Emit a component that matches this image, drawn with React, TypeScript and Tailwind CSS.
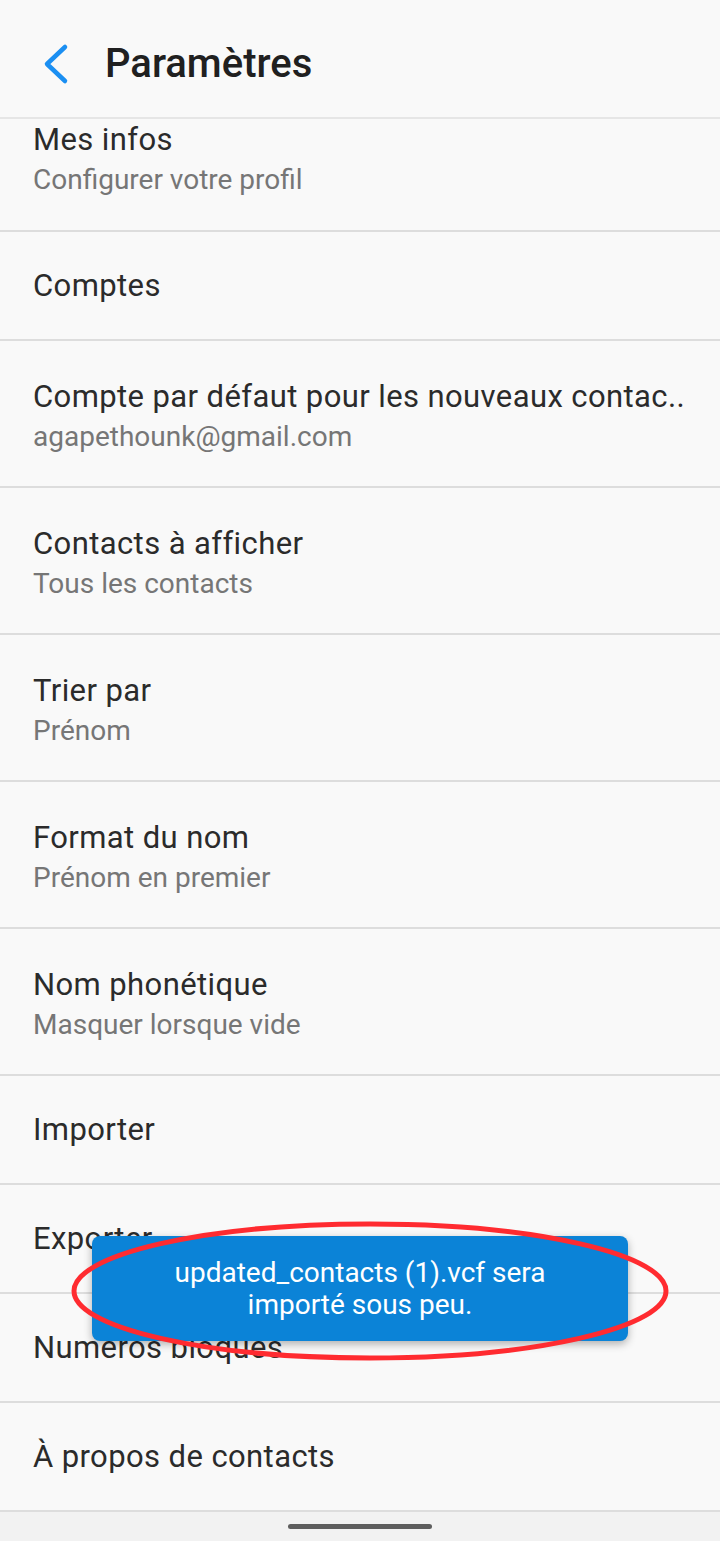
import React from 'react';

type Row = { title: string; subtitle?: string };

const rows: Row[] = [
  { title: 'Comptes' },
  { title: 'Compte par défaut pour les nouveaux contac..', subtitle: 'agapethounk@gmail.com' },
  { title: 'Contacts à afficher', subtitle: 'Tous les contacts' },
  { title: 'Trier par', subtitle: 'Prénom' },
  { title: 'Format du nom', subtitle: 'Prénom en premier' },
  { title: 'Nom phonétique', subtitle: 'Masquer lorsque vide' },
  { title: 'Importer' },
  { title: 'Exporter' },
  { title: 'Numéros bloqués' },
  { title: 'À propos de contacts' },
];

const SettingRow: React.FC<{ row: Row }> = ({ row }) => (
  <div
    className={`shrink-0 flex flex-col justify-center px-[33px] border-b-2 border-[#dddddd] ${
      row.subtitle ? 'h-[147px] pt-[4px]' : 'h-[109px]'
    }`}
  >
    <div className="text-[31px] leading-[40px] tracking-[0.4px] text-[#2b2b2b] whitespace-nowrap">{row.title}</div>
    {row.subtitle && (
      <div className="mt-[2px] text-[28px] leading-[36px] text-[#767676] whitespace-nowrap">{row.subtitle}</div>
    )}
  </div>
);

export default function App() {
  return (
    <div className="relative w-[720px] h-[1541px] overflow-hidden bg-[#f9f9f9] font-['Roboto',sans-serif] flex flex-col">
      {/* header */}
      <div className="h-[119px] shrink-0 flex items-center pt-[10px] border-b-2 border-[#e6e6e6]">
        <svg width="40" height="44" viewBox="0 0 40 44" className="ml-[36px]">
          <path d="M29 5 L11 22 L29 39" fill="none" stroke="#1b8ff2" strokeWidth="4.5" strokeLinecap="round" strokeLinejoin="round" />
        </svg>
        <span className="ml-[29px] text-[40px] font-medium text-[#202020]">Paramètres</span>
      </div>

      {/* partially scrolled first row */}
      <div className="h-[113px] shrink-0 flex flex-col pt-[1px] px-[33px] border-b-2 border-[#dddddd]">
        <div className="text-[31px] leading-[40px] tracking-[0.4px] text-[#2b2b2b]">Mes infos</div>
        <div className="mt-[2px] text-[28px] leading-[36px] text-[#767676]">Configurer votre profil</div>
      </div>

      {rows.map((r) => (
        <SettingRow key={r.title} row={r} />
      ))}

      <div className="flex-1 bg-[#f2f2f2] flex items-center justify-center">
        <div className="w-[144px] h-[5px] rounded-full bg-[#5e5e5e]" />
      </div>

      {/* toast */}
      <div className="absolute left-[92px] top-[1236px] w-[536px] h-[105px] rounded-[8px] bg-[#0b83d7] shadow-[0_3px_8px_rgba(0,0,0,0.3)] flex items-center justify-center text-center text-white text-[28px] leading-[32px]">
        updated_contacts (1).vcf sera
        <br />
        importé sous peu.
      </div>

      {/* annotation */}
      <svg className="absolute left-0 top-0 pointer-events-none" width="720" height="1541">
        <ellipse cx="370" cy="1291" rx="296" ry="67" fill="none" stroke="#ff2b30" strokeWidth="5" />
      </svg>
    </div>
  );
}
